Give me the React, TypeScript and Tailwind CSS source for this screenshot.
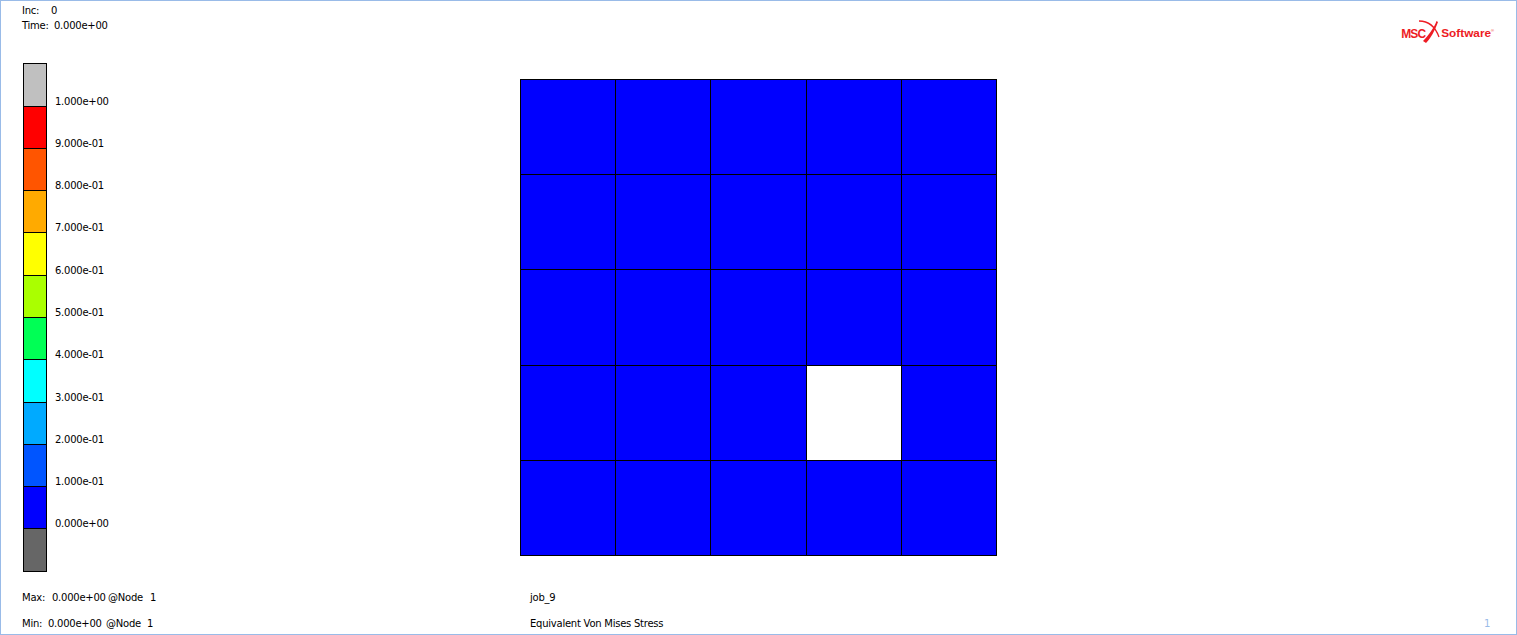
const FONT = "font-['DejaVu_Sans',sans-serif]";

const legend = [
  { color: "bg-[#c0c0c0]", height: "h-[43px]", label: "1.000e+00" },
  { color: "bg-[#ff0000]", height: "h-[42px]", label: "9.000e-01" },
  { color: "bg-[#ff5500]", height: "h-[42px]", label: "8.000e-01" },
  { color: "bg-[#ffaa00]", height: "h-[42px]", label: "7.000e-01" },
  { color: "bg-[#ffff00]", height: "h-[43px]", label: "6.000e-01" },
  { color: "bg-[#aaff00]", height: "h-[42px]", label: "5.000e-01" },
  { color: "bg-[#00ff55]", height: "h-[42px]", label: "4.000e-01" },
  { color: "bg-[#00ffff]", height: "h-[43px]", label: "3.000e-01" },
  { color: "bg-[#00aaff]", height: "h-[42px]", label: "2.000e-01" },
  { color: "bg-[#0055ff]", height: "h-[42px]", label: "1.000e-01" },
  { color: "bg-[#0000ff]", height: "h-[42px]", label: "0.000e+00" },
  { color: "bg-[#666666]", height: "h-[43px]", label: "" },
];

const cells = Array.from({ length: 25 }, (_, i) => i);

export default function App() {
  return (
    <div className={`${FONT} flex h-[635px] w-[1517px] overflow-hidden border border-[#99bbe8] bg-white text-[10px] tracking-[-0.24px] text-black`}>
      <div className="flex w-[519px] shrink-0 flex-col pl-[21px]">
        <div className="h-[62px] shrink-0 pt-[2px] leading-[15px]">
          <div>
            <span className="inline-block w-[29px]">Inc:</span>0
          </div>
          <div>
            <span className="inline-block w-[32px]">Time:</span>0.000e+00
          </div>
        </div>
        <div className="ml-px flex w-[120px] shrink-0 flex-col">
          {legend.map((row) => (
            <div key={row.color} className={`flex items-end ${row.height}`}>
              <div className={`h-full w-[24px] border-x border-t border-black ${row.color}`} />
              <span className="mb-[-2px] pl-[8px] leading-[12px]">{row.label}</span>
            </div>
          ))}
          <div className="h-px w-[24px] bg-black" />
        </div>
        <div className="mt-[13px] shrink-0 leading-[26px]">
          <div>
            <span className="inline-block w-[30px]">Max:</span>
            <span className="inline-block w-[56px]">0.000e+00</span>
            <span className="inline-block w-[42px]">@Node</span>1
          </div>
          <div>
            <span className="inline-block w-[26px]">Min:</span>
            <span className="inline-block w-[58px]">0.000e+00</span>
            <span className="inline-block w-[41px]">@Node</span>1
          </div>
        </div>
      </div>
      <div className="flex w-[478px] shrink-0 flex-col pt-[78px]">
        <div className="grid h-[477px] w-[477px] shrink-0 grid-cols-[95px_95px_96px_95px_95px] grid-rows-[95px_95px_96px_95px_95px] border-t border-l border-black bg-[#0000ff]">
          {cells.map((i) => (
            <div
              key={i}
              className={`border-r border-b border-black ${i === 18 ? "bg-white" : "bg-[#0000ff]"}`}
            />
          ))}
        </div>
        <div className="mt-[29px] shrink-0 pl-[10px] leading-[26px]">
          <div>job_9</div>
          <div>Equivalent Von Mises Stress</div>
        </div>
      </div>
      <div className="flex flex-1 flex-col items-end">
        <div className="mt-[20px] mr-[22px] flex h-[26px] items-center font-['Liberation_Sans',sans-serif] font-bold tracking-normal text-[#ed1c24]">
          <span className="text-[12px] tracking-[-0.9px]">MSC</span>
          <svg viewBox="0 0 16 26" className="h-[26px] w-[16px] overflow-visible" fill="none">
            <path d="M-6 0 C3 0 10 5 14 16" stroke="#ed1c24" strokeWidth="1.3" />
            <path d="M11.5 0 L13 1 C10 9 6 17 1 22 L-2 20 C3 15 9 7 11.5 0 Z" fill="#ed1c24" />
          </svg>
          <span className="text-[11.8px]">Software</span>
          <span className="mb-[6px] text-[4px] font-normal">®</span>
        </div>
        <div className="mt-auto mr-[26px] mb-[3px] text-[#99bbe8]">1</div>
      </div>
    </div>
  );
}
